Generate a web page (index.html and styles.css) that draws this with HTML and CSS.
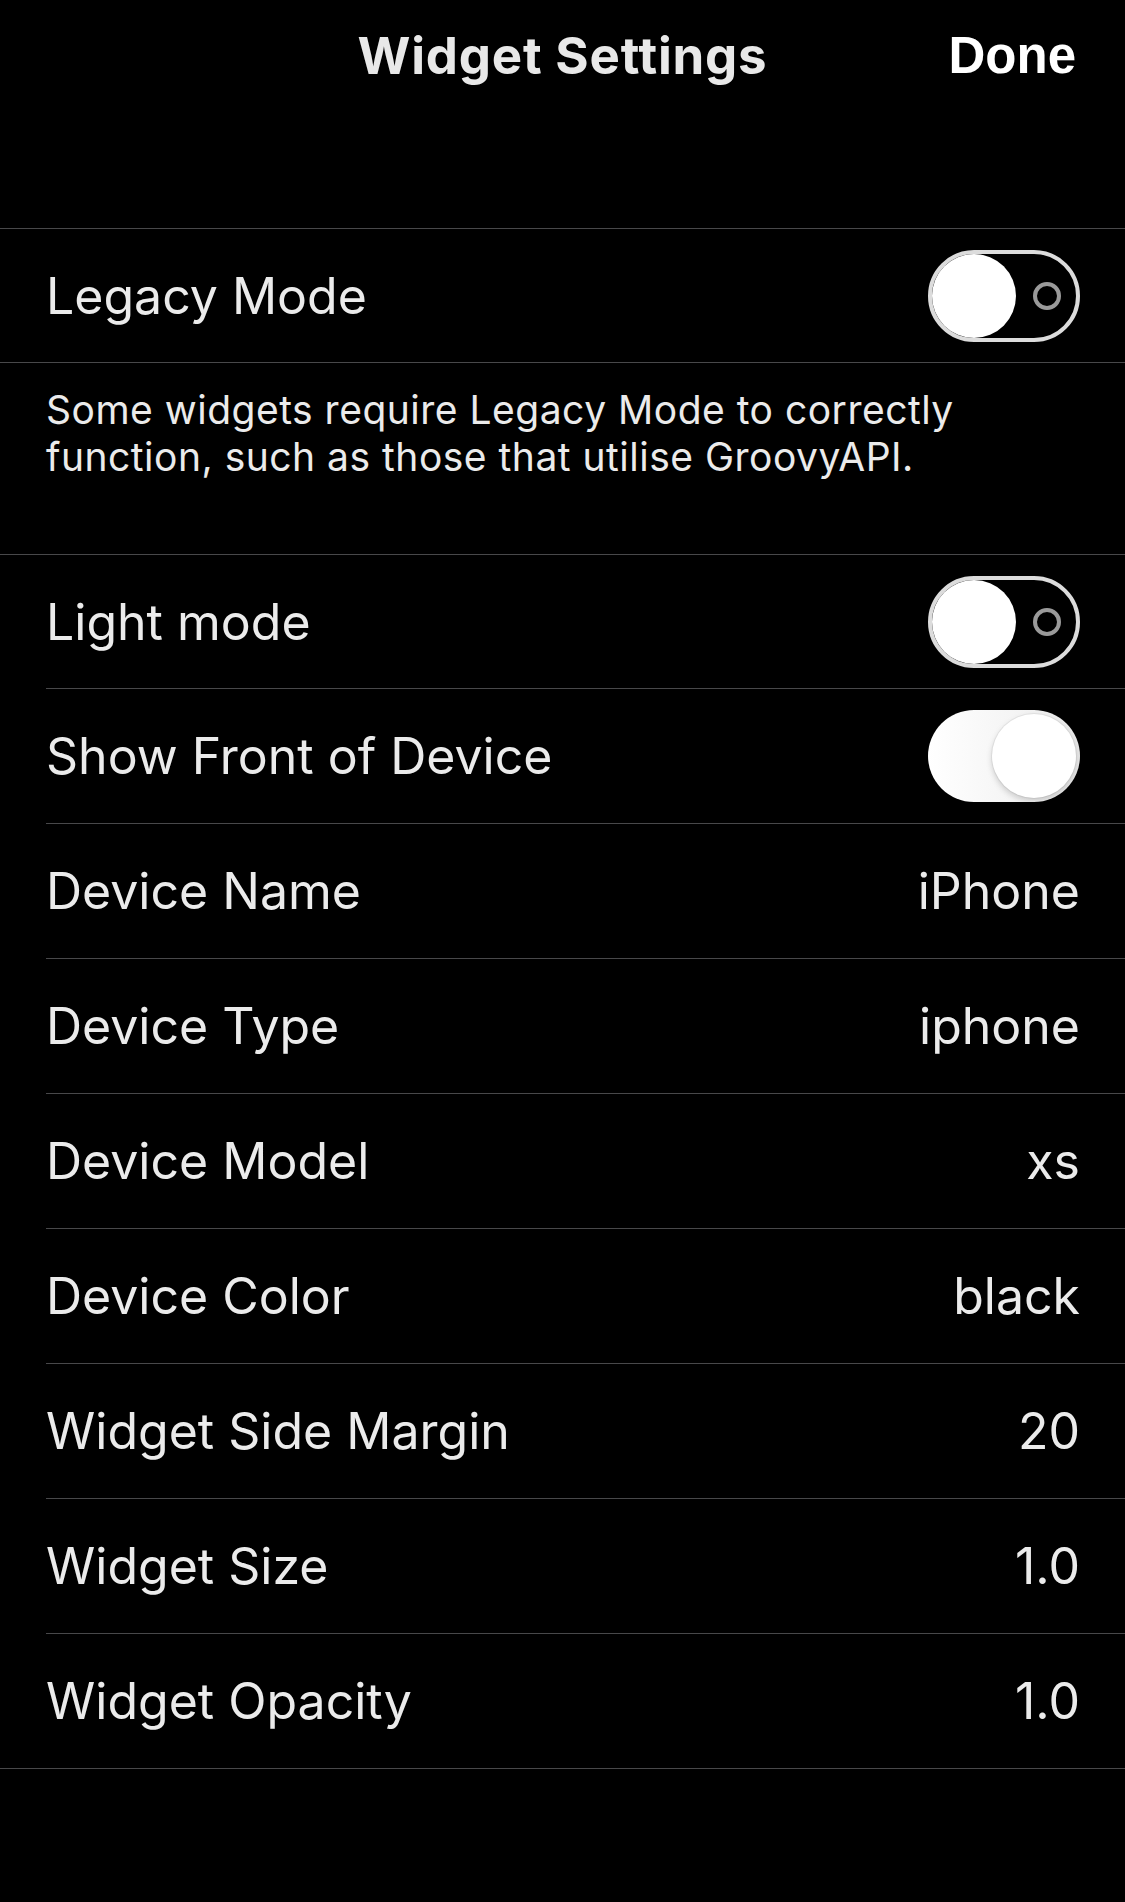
FILE: index.html
```html
<!DOCTYPE html>
<html lang="en">
<head>
<meta charset="utf-8">
<title>Widget Settings</title>
<link rel="stylesheet" href="styles.css">
</head>
<body>
<div class="screen">
  <header class="navbar">
    <div class="nav-spacer"></div>
    <h1 class="nav-title">Widget Settings</h1>
    <button class="nav-done">Done</button>
  </header>

  <section class="group">
    <div class="row">
      <span class="label">Legacy Mode</span>
      <span class="switch switch-off"><span class="knob"></span><span class="off-ring"></span></span>
    </div>
  </section>

  <p class="footnote">Some widgets require Legacy Mode to correctly function, such as those that utilise GroovyAPI.</p>

  <section class="group">
    <div class="row">
      <span class="label">Light mode</span>
      <span class="switch switch-off"><span class="knob"></span><span class="off-ring"></span></span>
    </div>
    <div class="row">
      <span class="label">Show Front of Device</span>
      <span class="switch switch-on"><span class="knob"></span></span>
    </div>
    <div class="row">
      <span class="label">Device Name</span>
      <span class="value">iPhone</span>
    </div>
    <div class="row">
      <span class="label">Device Type</span>
      <span class="value">iphone</span>
    </div>
    <div class="row">
      <span class="label">Device Model</span>
      <span class="value">xs</span>
    </div>
    <div class="row">
      <span class="label">Device Color</span>
      <span class="value">black</span>
    </div>
    <div class="row">
      <span class="label">Widget Side Margin</span>
      <span class="value">20</span>
    </div>
    <div class="row">
      <span class="label">Widget Size</span>
      <span class="value">1.0</span>
    </div>
    <div class="row">
      <span class="label">Widget Opacity</span>
      <span class="value">1.0</span>
    </div>
  </section>
</div>
</body>
</html>
```

FILE: styles.css
```css
html, body {
  margin: 0;
  padding: 0;
  background: #000;
}

.screen {
  width: 1125px;
  min-height: 1902px;
  background: #000;
  font-family: Inter, "Liberation Sans", sans-serif;
  color: #ebebeb;
}

.navbar {
  display: grid;
  grid-template-columns: 1fr auto 1fr;
  align-items: start;
  height: 228px;
  box-sizing: border-box;
  padding-top: 25px;
}

.nav-title {
  margin: 0;
  font-family: Inter, "Liberation Sans", sans-serif;
  font-weight: 700;
  font-size: 51px;
  line-height: 61px;
  color: #e8e8e8;
  letter-spacing: 0.8px;
  white-space: nowrap;
}

.nav-done {
  justify-self: end;
  margin: 0 49px 0 0;
  padding: 0;
  border: 0;
  background: none;
  font-family: "Liberation Sans", Arial, sans-serif;
  font-weight: 700;
  font-size: 51px;
  line-height: 61px;
  color: #fff;
}

.group {
  border-top: 1px solid #48484a;
  border-bottom: 1px solid #48484a;
  padding-left: 46px;
}

.row {
  display: flex;
  align-items: center;
  justify-content: space-between;
  height: 134px;
  padding-right: 45px;
  border-bottom: 1px solid #48484a;
}

.row:first-child {
  height: 133px;
}

.row:last-child {
  border-bottom: 0;
}

.label,
.value {
  font-size: 50px;
  line-height: 60px;
  color: #ebebeb;
  white-space: nowrap;
}

.footnote {
  margin: 0;
  padding: 23px 46px 74px 46px;
  font-size: 39px;
  line-height: 47px;
  color: #ebebeb;
  letter-spacing: 0.5px;
}

.switch {
  position: relative;
  display: block;
  width: 152px;
  height: 92px;
  box-sizing: border-box;
  border-radius: 46px;
  flex: none;
}

.switch-off {
  border: 4px solid #dcdcdc;
  background: #000;
}

.switch-off .knob {
  position: absolute;
  left: 0;
  top: 0;
  width: 84px;
  height: 84px;
  border-radius: 50%;
  background: #fff;
}

.off-ring {
  position: absolute;
  left: 101px;
  top: 28px;
  width: 28px;
  height: 28px;
  box-sizing: border-box;
  border: 4px solid #9a9a9a;
  border-radius: 50%;
}

.switch-on {
  background: linear-gradient(90deg, #ffffff 0%, #f4f4f4 60%, #e8e8e8 100%);
}

.switch-on .knob {
  position: absolute;
  right: 4px;
  top: 4px;
  width: 84px;
  height: 84px;
  border-radius: 50%;
  background: #fff;
  box-shadow: 0 3px 6px rgba(0, 0, 0, 0.18), 0 0 0 1px rgba(0, 0, 0, 0.05);
}
```
